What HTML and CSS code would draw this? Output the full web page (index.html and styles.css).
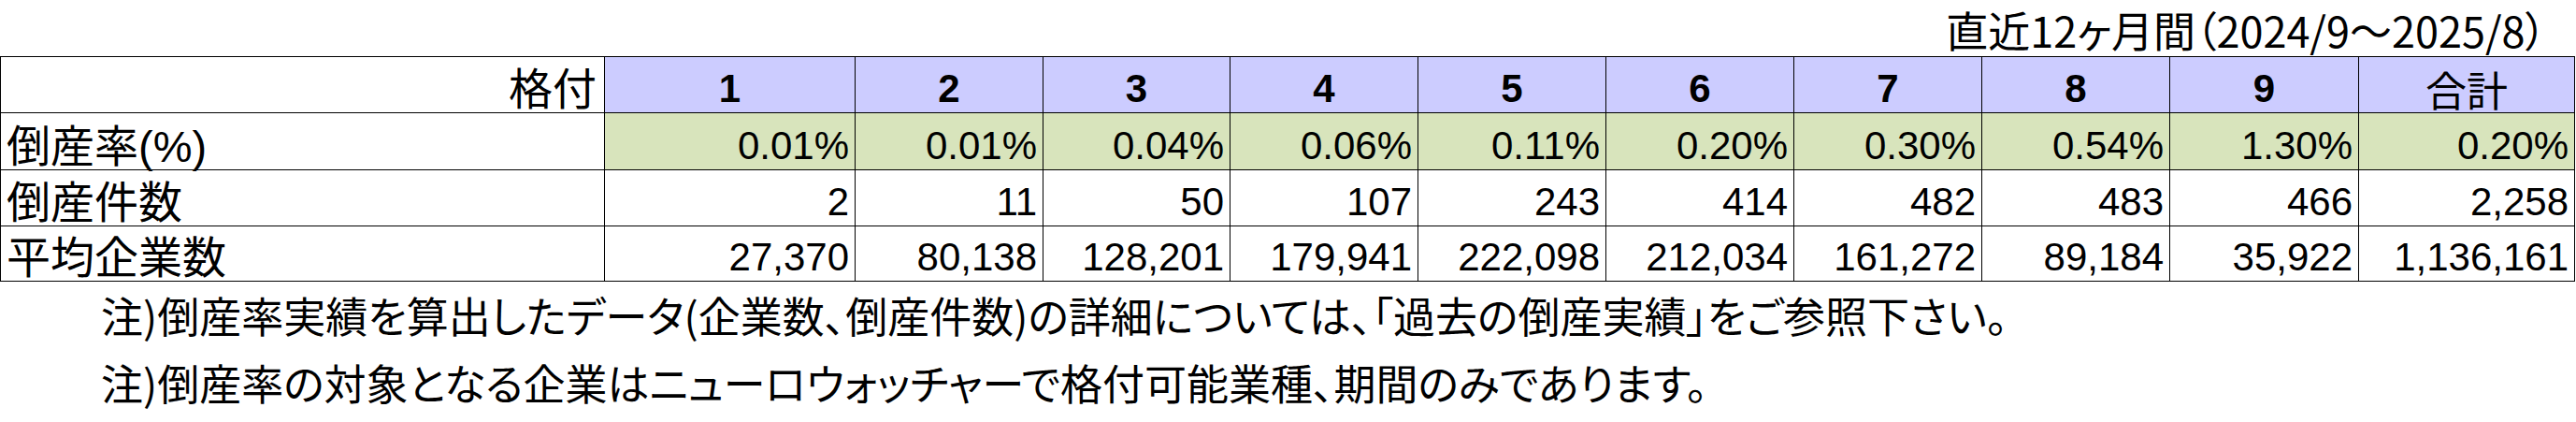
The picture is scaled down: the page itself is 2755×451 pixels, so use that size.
FILE: index.html
```html
<!DOCTYPE html>
<html lang="ja">
<head>
<meta charset="utf-8">
<title>倒産率実績</title>
<link rel="stylesheet" href="styles.css">
</head>
<body>
<div class="page">
  <div class="title">直近12ヶ月間（2024/9～2025/8）</div>
  <div class="grid">
    <div class="c lbl corner">格付</div>
    <div class="c hd">1</div>
    <div class="c hd">2</div>
    <div class="c hd">3</div>
    <div class="c hd">4</div>
    <div class="c hd">5</div>
    <div class="c hd">6</div>
    <div class="c hd">7</div>
    <div class="c hd">8</div>
    <div class="c hd">9</div>
    <div class="c hd jp">合計</div>

    <div class="c lbl">倒産率(%)</div>
    <div class="c num rate">0.01%</div>
    <div class="c num rate">0.01%</div>
    <div class="c num rate">0.04%</div>
    <div class="c num rate">0.06%</div>
    <div class="c num rate">0.11%</div>
    <div class="c num rate">0.20%</div>
    <div class="c num rate">0.30%</div>
    <div class="c num rate">0.54%</div>
    <div class="c num rate">1.30%</div>
    <div class="c num rate">0.20%</div>

    <div class="c lbl">倒産件数</div>
    <div class="c num">2</div>
    <div class="c num">11</div>
    <div class="c num">50</div>
    <div class="c num">107</div>
    <div class="c num">243</div>
    <div class="c num">414</div>
    <div class="c num">482</div>
    <div class="c num">483</div>
    <div class="c num">466</div>
    <div class="c num">2,258</div>

    <div class="c lbl">平均企業数</div>
    <div class="c num">27,370</div>
    <div class="c num">80,138</div>
    <div class="c num">128,201</div>
    <div class="c num">179,941</div>
    <div class="c num">222,098</div>
    <div class="c num">212,034</div>
    <div class="c num">161,272</div>
    <div class="c num">89,184</div>
    <div class="c num">35,922</div>
    <div class="c num">1,136,161</div>
  </div>
  <div class="notes">
    <p>注)倒産率実績を算出したデータ(企業数、倒産件数)の詳細については、「過去の倒産実績」をご参照下さい。</p>
    <p>注)倒産率の対象となる企業はニューロウォッチャーで格付可能業種、期間のみであります。</p>
  </div>
</div>
</body>
</html>
```
FILE: styles.css
```css
html, body {
  margin: 0;
  padding: 0;
  background: #ffffff;
  color: #000000;
}

.page {
  width: 2755px;
}

.title {
  height: 60px;
  box-sizing: border-box;
  display: flex;
  justify-content: flex-end;
  align-items: flex-end;
  padding: 0 32px 6px 0;
  font: 45px/1 "Noto Sans CJK JP", sans-serif;
  font-feature-settings: "palt";
}

.grid {
  display: grid;
  grid-template-columns: 646px 268px 201px 200px 201px 201px 201px 201px 201px 202px 231px;
  grid-template-rows: 60px 61px 60px 59px;
  width: max-content;
  border-top: 1px solid #000;
  border-left: 1px solid #000;
}

.c {
  box-sizing: border-box;
  border-right: 1px solid #000;
  border-bottom: 1px solid #000;
  display: flex;
  align-items: flex-end;
  justify-content: flex-end;
  padding: 0 6px 4px;
  line-height: 1;
  white-space: nowrap;
}

.lbl {
  justify-content: flex-start;
  padding-left: 6px;
  padding-bottom: 1px;
  font: 47px/1 "Liberation Sans", "Noto Sans CJK JP", sans-serif;
}

.corner {
  justify-content: flex-end;
  padding-right: 8px;
}

.hd {
  background: #ccccff;
  justify-content: center;
  font: bold 42px/1 "Liberation Sans", "Noto Sans CJK JP", sans-serif;
}

.hd.jp {
  font: 44px/1 "Noto Sans CJK JP", sans-serif;
  padding-bottom: 3px;
}

.num {
  font: 42px/1 "Liberation Sans", "Noto Sans CJK JP", sans-serif;
}

.rate {
  background: #d8e4bc;
}

.notes {
  padding-left: 108px;
  font: 45px/72px "Noto Sans CJK JP", sans-serif;
  font-feature-settings: "palt";
}

.notes p {
  margin: 0;
}
```
